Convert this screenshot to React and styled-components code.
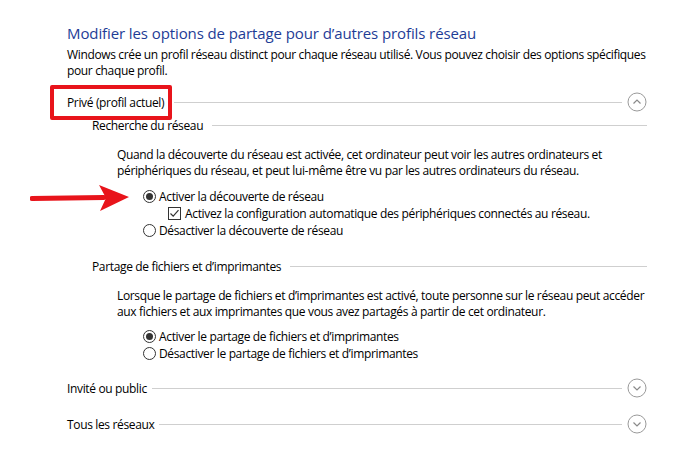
import React from 'react';
import styled, { createGlobalStyle } from 'styled-components';

const FONT = '"Open Sans", "Noto Sans", sans-serif';

const GlobalStyle = createGlobalStyle`
    html, body {
        margin: 0;
        background: #ffffff;
    }
    body {
        font-family: ${FONT};
        color: #000000;
        -webkit-font-smoothing: antialiased;
    }
`;

const Page = styled.div`
    position: relative;
    width: 673px;
    height: 475px;
    box-sizing: border-box;
    padding: 23px 26px 0 67px;
    overflow: hidden;
`;

const Title = styled.h1`
    margin: 0;
    font-size: 15px;
    line-height: 20px;
    font-weight: 400;
    letter-spacing: -0.1px;
    color: #1e3c96;
    white-space: nowrap;
`;

const Text = styled.p`
    margin: ${p => p.$top || 0}px 0 0 ${p => p.$indent || 0}px;
    font-size: 12px;
    line-height: 16px;
    letter-spacing: -0.35px;
    white-space: nowrap;
`;

const Header = styled.div`
    position: relative;
    display: flex;
    align-items: center;
    height: ${p => (p.$toggle ? 20 : 15)}px;
    margin: ${p => p.$top}px 0 0 ${p => p.$indent || 0}px;
`;

const Label = styled.span`
    position: relative;
    font-size: 12px;
    letter-spacing: -0.35px;
    white-space: nowrap;
`;

const Rule = styled.div`
    flex: 1;
    height: 1px;
    margin-left: ${p => p.$gap || 6}px;
    background: #cfcfcf;
`;

const Toggle = styled.div`
    display: flex;
    align-items: center;
    justify-content: center;
    width: 20px;
    height: 20px;
    margin-left: 5px;
`;

const Options = styled.div`
    display: flex;
    flex-direction: column;
    margin: ${p => p.$top}px 0 0 76px;
`;

const Option = styled.label`
    display: flex;
    align-items: center;
    height: 17px;
    margin-left: ${p => p.$indent || 0}px;
    font-size: 12px;
    letter-spacing: -0.35px;
    white-space: nowrap;
`;

const Radio = styled.span`
    position: relative;
    width: 11px;
    height: 11px;
    margin-right: 3px;
    border: 1px solid #333333;
    border-radius: 50%;
    flex-shrink: 0;

    &::after {
        content: '';
        display: ${p => (p.$checked ? 'block' : 'none')};
        position: absolute;
        left: 2px;
        top: 2px;
        width: 7px;
        height: 7px;
        border-radius: 50%;
        background: #333333;
    }
`;

const Check = styled.span`
    display: flex;
    align-items: center;
    justify-content: center;
    width: 11px;
    height: 11px;
    margin-right: 4px;
    border: 1px solid #333333;
    flex-shrink: 0;
`;

// annotation overlays drawn on top of the screenshot
const Highlight = styled.div`
    position: absolute;
    left: -17px;
    right: -8px;
    top: -9px;
    bottom: -9px;
    border: 4px solid #e8141b;
    border-radius: 2px;
`;

const Arrow = styled.svg`
    position: absolute;
    left: 30px;
    top: 183px;
`;

const Chevron = ({ up }) => (
    <svg width="20" height="20" viewBox="0 0 20 20">
        <circle cx="10" cy="10" r="9" fill="none" stroke="#9a9a9a" strokeWidth="1" />
        <path d={up ? 'M6.5 11.5 L10 8 L13.5 11.5' : 'M6.5 8.5 L10 12 L13.5 8.5'}
            fill="none" stroke="#8a8a8a" strokeWidth="1.2" />
    </svg>
);

const Tick = () => (
    <svg width="11" height="11" viewBox="0 0 11 11">
        <path d="M1.5 5.5 L4.2 8.2 L9.5 2.2" fill="none" stroke="#333" strokeWidth="1.2" />
    </svg>
);

const App = () => {
    return (
        <Page>
            <GlobalStyle />
            <Title>Modifier les options de partage pour d’autres profils réseau</Title>
            <Text $top={4}>
                Windows crée un profil réseau distinct pour chaque réseau utilisé. Vous pouvez choisir des options spécifiques<br />
                pour chaque profil.
            </Text>

            <Header $toggle $top={13}>
                <Label>Privé (profil actuel)<Highlight /></Label>
                <Rule $gap={10} />
                <Toggle><Chevron up /></Toggle>
            </Header>

            <Header $top={6} $indent={25}>
                <Label>Recherche du réseau</Label>
                <Rule $gap={9} />
            </Header>
            <Text $top={14} $indent={50}>
                Quand la découverte du réseau est activée, cet ordinateur peut voir les autres ordinateurs et<br />
                périphériques du réseau, et peut lui-même être vu par les autres ordinateurs du réseau.
            </Text>
            <Options $top={9}>
                <Option><Radio $checked />Activer la découverte de réseau</Option>
                <Option $indent={25}><Check><Tick /></Check>Activez la configuration automatique des périphériques connectés au réseau.</Option>
                <Option><Radio />Désactiver la découverte de réseau</Option>
            </Options>

            <Header $top={20} $indent={25}>
                <Label>Partage de fichiers et d’imprimantes</Label>
                <Rule $gap={9} />
            </Header>
            <Text $top={14} $indent={50}>
                Lorsque le partage de fichiers et d’imprimantes est activé, toute personne sur le réseau peut accéder<br />
                aux fichiers et aux imprimantes que vous avez partagés à partir de cet ordinateur.
            </Text>
            <Options $top={8}>
                <Option><Radio $checked />Activer le partage de fichiers et d’imprimantes</Option>
                <Option><Radio />Désactiver le partage de fichiers et d’imprimantes</Option>
            </Options>

            <Header $toggle $top={16}>
                <Label>Invité ou public</Label>
                <Rule $gap={5} />
                <Toggle><Chevron /></Toggle>
            </Header>
            <Header $toggle $top={16}>
                <Label>Tous les réseaux</Label>
                <Rule $gap={5} />
                <Toggle><Chevron /></Toggle>
            </Header>

            <Arrow width="104" height="30" viewBox="0 0 104 30">
                <path d="M2 15.5 L74 14.5" stroke="#e8141b" strokeWidth="5" strokeLinecap="round" />
                <path d="M69 2 L99 14 L70 28 L76 15 Z" fill="#e8141b" />
            </Arrow>
        </Page>
    );
};

export default App;
